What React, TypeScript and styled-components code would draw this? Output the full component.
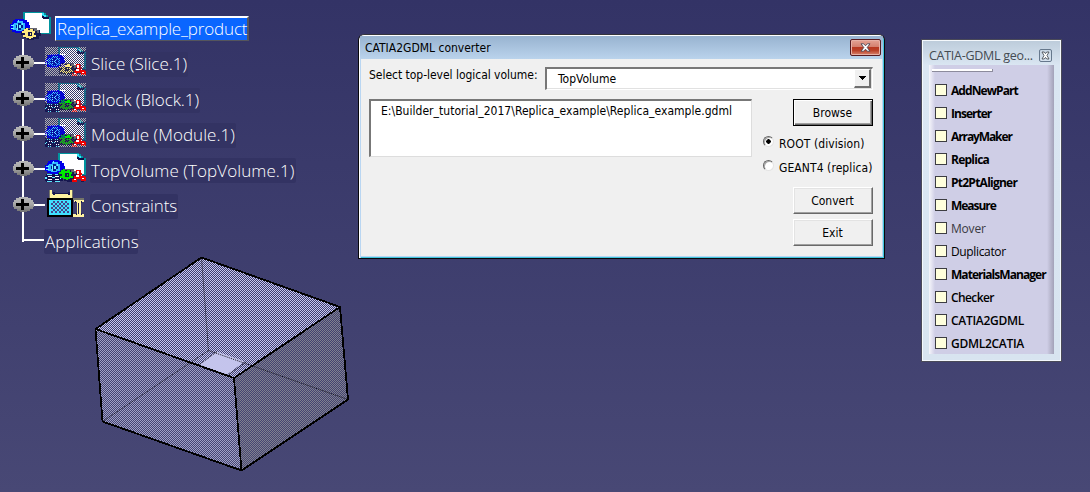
import React from 'react';
import styled, { createGlobalStyle } from 'styled-components';

const GlobalStyle = createGlobalStyle`
  * { box-sizing: border-box; }
  body { margin: 0; overflow: hidden; }
`;

const Desktop = styled.main`
  position: relative;
  width: 1090px;
  height: 492px;
  overflow: hidden;
  background: linear-gradient(#333366, #484875);
`;

/* ---------- specification tree ---------- */

const Tree = styled.section`
  position: absolute;
  left: 10px;
  top: 12px;
  width: 300px;
  color: #fff;
  font: 300 17px/24px 'Open Sans', 'Noto Sans', sans-serif;

  &::before {
    content: '';
    position: absolute;
    left: 12px;
    top: 27px;
    width: 2px;
    height: 203px;
    background: #fff;
  }
`;

const RootRow = styled.div`
  position: relative;
  display: flex;
  gap: 4px;
  height: 35px;
`;

const RootName = styled.span`
  margin-top: 4px;
  width: 194px;
  height: 25px;
  padding-left: 1px;
  border: solid;
  border-width: 2px 2px 1px 1px;
  border-color: #fff #55555c #55555c #fff;
  background: #0a66ff;
  line-height: 22px;
  letter-spacing: -0.16px;
  white-space: nowrap;
`;

const TreeRow = styled.div<{ $height: number }>`
  position: relative;
  display: flex;
  height: ${(p) => p.$height}px;
  padding-left: 3px;
`;

const Expander = styled.svg`
  width: 21px;
  height: 15px;
  margin-top: 8px;
  flex: none;
`;

const Branch = styled.i<{ $width?: number }>`
  width: ${(p) => p.$width ?? 11}px;
  height: 2px;
  margin-top: 15px;
  background: #fff;
`;

const LeafGap = styled.i`
  width: 9px;
`;

const TreeLabel = styled.span<{ $width: number; $spacing: number; $gap?: number; $line?: number }>`
  width: ${(p) => p.$width}px;
  height: 25px;
  margin: 5px 0 0 ${(p) => p.$gap ?? 4}px;
  padding-left: 1px;
  border-radius: 2px;
  background: #333363;
  letter-spacing: ${(p) => p.$spacing}px;
  line-height: ${(p) => p.$line ?? 24}px;
  white-space: nowrap;
`;

const IconSvg = styled.svg`
  width: 41px;
  height: 29px;
  flex: none;
  shape-rendering: crispEdges;
`;

const BlueGear = ({ x, y }: { x: number; y: number }) => (
  <g transform={`translate(${x} ${y})`}>
    <path d="M5 0h9v1h3v2h2v3h1v4h-2v2h-3v2H5v-1H2v-2H0V5h2V3h1V1h2z" fill="#0000e8" />
    <path d="M4 4h3V2h6v2h2v7h-3v1H6v-1H3V5h1z" fill="#30b8ff" />
    <path d="M8 4h3v2h2v3h-2v2H8V9H6V6h2z" fill="#001c90" />
    <path d="M9 6h2v3H9zM8 1h1v2H8zM1 6h3v1H1zM1 9h3v1H1z" fill="#70f0ff" />
    <path d="M7 5h1v6H7zM12 4h1v2h-1z" fill="#70f0ff" />
  </g>
);

const SmallGear = ({ x, y, color }: { x: number; y: number; color: string }) => (
  <g transform={`translate(${x} ${y})`}>
    <path d="M4 0h12v2h3v3h1v3h-2v3h-5v1H6v-2H3V7H0V4h2V2h2z" fill="#17174d" />
    <path d="M7 0h9v2h2v3h-2V3h-3V1H7z" fill="#686870" />
    <path
      d="M3 1h2V0h2v2h2V1h3v2h2v2h-1v2h2v2h-3v1h-2v1H8v-1H5V9H2V7h2V5H1V3h2zM7 4v4h4V4z"
      fill={color}
      fillRule="evenodd"
    />
    <path d="M9 5h1v2H9z" fill={color} />
  </g>
);

const Sheet = ({ x }: { x: number }) => (
  <g transform={`translate(${x} 0)`}>
    <path d="M0 0h21v1h2v2h2v2h3v17H0z" fill="#00949e" />
    <path d="M2 1h17v4h3v2h4v14H2z" fill="#fff" />
    <path d="M19 1h2v2h2v2h3v1h-3V5h-3z" fill="#35e5ff" />
    <path d="M19 4h2v1h5v2h-6V6h-1z" fill="#101048" />
  </g>
);

const PartShapes = ({ gear, wheels }: { gear: string; wheels: boolean }) => (
  <>
    <Sheet x={13} />
    <BlueGear x={0} y={7} />
    {wheels && (
      <g>
        <path d="M1 21h15v2h2v5h-3v1H1v-1H0v-5h1z" fill="#13134f" />
        <path d="M2 21h5v1H2zM10 21h5v1h-5zM0 24h2v2H0zM7 24h3v1H7zM15 24h2v2h-2zM2 28h5v1H2zM10 28h5v1h-5z" fill="#5eeaff" />
        <path d="M3 23h4v1H3zM10 23h4v1h-4zM3 26h4v1H3zM10 26h4v1h-4z" fill="#fff" />
      </g>
    )}
    <SmallGear x={13} y={16} color={gear} />
    <path d="M31 17h5v3h1v3h3v1h1v4h-5v-2h-4v3h-5v-3h2v-3h3v-3h-1z" fill="#f00000" />
    <path d="M32 18h2v3h-2zM31 22h3v2h-3zM36 22h1v1h-1zM29 26h2v1h-2zM37 25h2v1h-2z" fill="#fff" />
    <path d="M22 27h5v2h-5zM36 28h3v1h-3z" fill="#171750" />
  </>
);

const dither = (x0: number, y0: number, x1: number, y1: number) => {
  let d = '';
  for (let y = y0; y < y1; y++) {
    for (let x = x0 + ((x0 + y) % 2); x < x1; x += 2) d += `M${x} ${y}h1v1h-1z`;
  }
  return d;
};

const grayDots = dither(0, 0, 13, 8) + dither(0, 8, 2, 20) + dither(34, 0, 41, 4) + dither(14, 27, 41, 29);
const darkDots = dither(13, 0, 34, 7) + dither(34, 4, 41, 7) + dither(20, 7, 41, 17) + dither(35, 17, 41, 22);
const footDots = dither(0, 20, 14, 29);
const gearDots = dither(2, 8, 20, 20);
const smallGearDots = dither(14, 20, 30, 27);

const PartIcon = ({ gear, wheels = true, hidden = true }: { gear: string; wheels?: boolean; hidden?: boolean }) => (
  <IconSvg viewBox="0 0 41 29">
    <PartShapes gear={gear} wheels={wheels} />
    {hidden && (
      <>
        <path d={grayDots} fill="#b0b0b4" />
        <path d={darkDots} fill="#39396b" />
        <path d={footDots} fill={wheels ? '#1c1c58' : '#b0b0b4'} />
        <path d={gearDots} fill="#0a0ab8" />
        <path d={smallGearDots} fill="#3a3a50" />
      </>
    )}
  </IconSvg>
);

const ProductIcon = () => (
  <IconSvg viewBox="0 0 41 29">
    <Sheet x={13} />
    <BlueGear x={0} y={7} />
    <SmallGear x={11} y={16} color="#ffe880" />
  </IconSvg>
);

const meshDots = dither(3, 6, 12, 12);

const ConstraintIcon = () => (
  <IconSvg viewBox="0 0 41 29">
    <path d="M4 1h2v8H4zM26 1h2v8h-2zM28 9h11v2H28z" fill="#747468" />
    <path d="M5 1h2v4h18V1h2v8H5zM29 11h10v2h-3v12h3v3H28v-3h4V13h-3z" fill="#fff3a0" />
    <path d="M8 3h2v1h13V3h2v3h-2V5H10v1H8zM30 12h1v2h-1zM36 12h1v2h-1zM33 14h1v11h-1zM31 24h1v2h-1zM36 24h1v2h-1z" fill="#17174c" />
    <path d="M2 9h26v19H2z" fill="#000" />
    <path d="M4 11h22v15H4z" fill="#40dfff" />
    <path d={meshDots} fill="#45458c" transform="scale(2)" />
  </IconSvg>
);

const Plus = () => (
  <Expander viewBox="0 0 21 15">
    <defs>
      <linearGradient id="knob" x2="0" y2="1">
        <stop offset="0" stopColor="#b8b8b8" />
        <stop offset=".45" stopColor="#aaa" />
        <stop offset="1" stopColor="#707070" />
      </linearGradient>
    </defs>
    <path d="M6 0h9v1h3v2h2v2h1v5h-1v2h-3v2h-3v1H7v-1H4v-2H1v-2H0V5h1V3h2V1h3z" fill="url(#knob)" shapeRendering="crispEdges" />
    <path d="M8 2h3v4h5v3h-5v4H8V9H3V6h5z" fill="#000" shapeRendering="crispEdges" />
  </Expander>
);

const treeItems = [
  { label: 'Slice (Slice.1)', height: 36, width: 98, spacing: 0, icon: <PartIcon gear="#ffe880" wheels={false} /> },
  { label: 'Block (Block.1)', height: 35, width: 110, spacing: -0.06, icon: <PartIcon gear="#00e800" /> },
  { label: 'Module (Module.1)', height: 35, width: 146, spacing: 0.03, icon: <PartIcon gear="#00e800" /> },
  { label: 'TopVolume (TopVolume.1)', height: 36, width: 206, spacing: 0.09, line: 25, icon: <PartIcon gear="#00e800" hidden={false} /> },
  { label: 'Constraints', height: 35, width: 88, spacing: -0.1, icon: <ConstraintIcon /> },
];

/* ---------- solid preview ---------- */

const Solid = styled.svg`
  position: absolute;
  left: 90px;
  top: 252px;
  width: 264px;
  height: 224px;
`;

const Dither = ({ id, color }: { id: string; color: string }) => (
  <pattern id={id} width="2" height="2" patternUnits="userSpaceOnUse">
    <path d="M0 0h1v1H0zM1 1h1v1H1z" fill={color} shapeRendering="crispEdges" />
  </pattern>
);

const BoxModel = () => (
  <Solid viewBox="90 252 264 224">
    <defs>
      <Dither id="faceTop" color="#c6c6f0" />
      <Dither id="faceLeft" color="#a0a0c6" />
      <Dither id="faceRight" color="#80808e" />
    </defs>
    <path d="M201.5 257.5L340 307L234 378L95.5 329z" fill="url(#faceTop)" />
    <path d="M95.5 329L234 378L241.5 470.5L102.5 421.5z" fill="url(#faceLeft)" />
    <path d="M340 307L348 399.5L241.5 470.5L234 378z" fill="url(#faceRight)" />
    <path d="M217 351.5L244.5 361.5L227 374.5L199 365z" fill="#c4c4ec" />
    <g fill="none" stroke="#101018" strokeDasharray="1 1">
      <path d="M201.5 257.5L208.5 350.5L102.5 421.5M208.5 350.5L348 399.5" />
      <path d="M217 351.5L199 365L226 375M246 362L228 375" />
    </g>
    <path
      d="M201.5 257.5L340 307L234 378L95.5 329zM95.5 329L102.5 421.5L241.5 470.5L348 399.5L340 307M234 378L241.5 470.5"
      fill="none"
      stroke="#000"
      strokeWidth="1.8"
      strokeLinejoin="round"
      shapeRendering="crispEdges"
    />
  </Solid>
);

/* ---------- converter dialog ---------- */

const Dialog = styled.section`
  position: absolute;
  left: 358px;
  top: 34px;
  width: 527px;
  height: 225px;
  display: flex;
  flex-direction: column;
  border: 1px solid #08080c;
  border-top-color: #35353c;
  border-radius: 6px 6px 0 0;
  overflow: hidden;
  background: #f0f0f0;
  box-shadow: inset 1px 1px #fff, inset 2px 0 #b9d6f2, inset -1px -1px #3fc4dc, inset -2px -2px #b9d6f2;
  color: #000;
  font: 12px/16px 'DejaVu Sans Condensed', 'DejaVu Sans', sans-serif;
`;

const TitleBar = styled.header`
  display: flex;
  justify-content: space-between;
  align-items: flex-start;
  height: 23px;
  margin: 1px 1px 0;
  padding: 3px 2px 0 5px;
  background: linear-gradient(#98b3d0, #bad3ec);
  line-height: 18px;
`;

const CloseButton = styled.button`
  display: grid;
  place-items: center;
  width: 31px;
  height: 17px;
  padding: 0;
  border: 1px solid #551a20;
  border-radius: 2px;
  background: linear-gradient(#e5a394 0, #d4806f 45%, #b83820 50%, #ba4128 70%, #d88570);
  box-shadow: inset 0 0 0 1px #e7b0a5;
`;

const DialogBody = styled.div`
  display: grid;
  grid-template-columns: 383px 110px;
  column-gap: 11px;
  padding: 8px 0 0 10px;
`;

const VolumeRow = styled.div`
  grid-column: 1 / -1;
  display: flex;
  justify-content: space-between;
  height: 32px;
`;

const Caption = styled.label`
  letter-spacing: -0.03px;
`;

const Combo = styled.div`
  display: flex;
  justify-content: space-between;
  width: 328px;
  height: 23px;
  padding: 0 1px 1px 11px;
  border: solid;
  border-width: 2px 1px 1px 2px;
  border-color: #777 #fff #fff #777;
  box-shadow: inset -1px -1px #e1e1e1;
  background: #fff;
  line-height: 20px;
`;

const DropButton = styled.span`
  display: grid;
  place-items: center;
  width: 17px;
  height: 19px;
  border: solid;
  border-width: 1px 2px 2px 1px;
  border-color: #fff #707070 #707070 #fff;
  background: #f0f0f0;
`;

const PathBox = styled.div`
  height: 58px;
  padding: 2px 0 0 10px;
  border: solid;
  border-width: 2px 1px 1px 2px;
  border-color: #777 #ddd #ddd #777;
  background: #fff;
  letter-spacing: 0.03px;
  white-space: nowrap;
`;

const Controls = styled.div`
  display: flex;
  flex-direction: column;
  align-items: flex-end;
`;

const PushButton = styled.button<{ $default?: boolean; $top?: number }>`
  width: 80px;
  height: 27px;
  margin-top: ${(p) => p.$top ?? 0}px;
  padding: 1px 1px 0 0;
  border: 1px solid;
  border-color: ${(p) => (p.$default ? '#000' : '#fff #696969 #696969 #fff')};
  box-shadow: ${(p) =>
    p.$default
      ? 'inset 1px 1px #fff, inset -1px -1px #696969, inset -2px -2px #a0a0a0'
      : 'inset -1px -1px #a0a0a0, inset 1px 1px #e3e3e3'};
  background: #f0f0f0;
  color: #000;
  font: inherit;
  line-height: 24px;
`;

const RadioRow = styled.label<{ $top: number }>`
  display: flex;
  gap: 5px;
  width: 110px;
  height: 16px;
  margin-top: ${(p) => p.$top}px;
  letter-spacing: 0.08px;
  white-space: nowrap;
`;

const RadioDot = styled.i<{ $checked?: boolean }>`
  flex: none;
  width: 11px;
  height: 11px;
  border: solid 1px;
  border-color: #666 #e4e4e4 #e4e4e4 #666;
  box-shadow: inset 1px 1px #aaa;
  border-radius: 50%;
  background: ${(p) => (p.$checked ? 'radial-gradient(circle, #000 0 2px, #fff 2.5px)' : '#fff')};
`;

/* ---------- macro toolbar ---------- */

const Palette = styled.aside`
  position: absolute;
  left: 921px;
  top: 39px;
  width: 141px;
  height: 323px;
  padding: 0 7px 7px;
  border: 1px solid #4a4a58;
  background: linear-gradient(#bccbda, #dae6f2 25px, #d8e4f0);
  box-shadow: inset 0 0 0 1px #f4f8fc;
  font-family: 'Open Sans', 'Noto Sans', sans-serif;
`;

const PaletteTitle = styled.header`
  display: flex;
  justify-content: space-between;
  height: 25px;
  padding: 7px 2px 0 0;
  color: #444b52;
  font-size: 12.5px;
  line-height: 17px;
  letter-spacing: -0.27px;
`;

const PaletteClose = styled.span`
  display: grid;
  place-items: center;
  width: 13px;
  height: 13px;
  margin-top: 2px;
  border: 1px solid #66788c;
  border-radius: 2px;
`;

const PaletteBody = styled.div`
  height: 289px;
  padding: 4px 0 0 3px;
  background: linear-gradient(90deg, #f6f6fb 0, #cfcee6 6px, #cfcee6 118px, #a3a2b8 125px);
`;

const Grip = styled.div`
  width: 61px;
  height: 3px;
  margin-bottom: 6px;
  background: #fff;
  border-right: 1px solid #8c8b9c;
  border-bottom: 1px solid #8c8b9c;
`;

const MacroRow = styled.div<{ $weight: number; $spacing: number; $muted?: boolean }>`
  display: flex;
  align-items: flex-start;
  gap: 4px;
  height: 23px;
  padding: 5px 0 0 3px;
  color: ${(p) => (p.$muted ? '#3a3a42' : '#000')};
  font-size: 12px;
  line-height: 15px;
  font-weight: ${(p) => p.$weight};
  letter-spacing: ${(p) => p.$spacing}px;
  white-space: nowrap;
`;

const MacroBox = styled.i`
  width: 12px;
  height: 12px;
  margin-top: 1px;
  border: 1px solid #3d3d42;
  background: #ffffdc;
`;

const macros = [
  { name: 'AddNewPart', weight: 700, spacing: -0.92 },
  { name: 'Inserter', weight: 700, spacing: -0.98 },
  { name: 'ArrayMaker', weight: 700, spacing: -1.1 },
  { name: 'Replica', weight: 700, spacing: -0.75 },
  { name: 'Pt2PtAligner', weight: 700, spacing: -0.75 },
  { name: 'Measure', weight: 700, spacing: -1.05 },
  { name: 'Mover', weight: 400, spacing: -0.2, muted: true },
  { name: 'Duplicator', weight: 500, spacing: -0.35 },
  { name: 'MaterialsManager', weight: 700, spacing: -0.95 },
  { name: 'Checker', weight: 600, spacing: -0.6 },
  { name: 'CATIA2GDML', weight: 600, spacing: -0.29 },
  { name: 'GDML2CATIA', weight: 600, spacing: -0.29 },
];

export default function App() {
  return (
    <>
      <GlobalStyle />
      <Desktop>
        <BoxModel />
        <Tree>
          <RootRow>
            <ProductIcon />
            <RootName>Replica_example_product</RootName>
          </RootRow>
          {treeItems.map((item) => (
            <TreeRow key={item.label} $height={item.height}>
              <Plus />
              <Branch />
              {item.icon}
              <TreeLabel $width={item.width} $spacing={item.spacing} $line={item.line}>{item.label}</TreeLabel>
            </TreeRow>
          ))}
          <TreeRow $height={35}>
            <LeafGap />
            <Branch $width={22} />
            <TreeLabel $width={94} $spacing={0.08} $gap={0} $line={25}>Applications</TreeLabel>
          </TreeRow>
        </Tree>

        <Dialog>
          <TitleBar>
            CATIA2GDML converter
            <CloseButton aria-label="Close">
              <svg width="11" height="9" viewBox="0 0 11 9">
                <path d="M1 .8h2.7l1.8 2 1.8-2H10L7.2 4.5 10 8.2H7.3l-1.8-2-1.8 2H1l2.8-3.7z" fill="#fff" stroke="#4c4654" strokeWidth=".9" />
              </svg>
            </CloseButton>
          </TitleBar>
          <DialogBody>
            <VolumeRow>
              <Caption>Select top-level logical volume:</Caption>
              <Combo>
                TopVolume
                <DropButton>
                  <svg width="7" height="4" viewBox="0 0 7 4" shapeRendering="crispEdges">
                    <path d="M0 0h7v1H6v1H5v1H4v1H3V3H2V2H1V1H0z" />
                  </svg>
                </DropButton>
              </Combo>
            </VolumeRow>
            <PathBox>E:\Builder_tutorial_2017\Replica_example\Replica_example.gdml</PathBox>
            <Controls>
              <PushButton $default>Browse</PushButton>
              <RadioRow $top={10}><RadioDot $checked />ROOT (division)</RadioRow>
              <RadioRow $top={8}><RadioDot />GEANT4 (replica)</RadioRow>
              <PushButton $top={11}>Convert</PushButton>
              <PushButton $top={5}>Exit</PushButton>
            </Controls>
          </DialogBody>
        </Dialog>

        <Palette>
          <PaletteTitle>
            CATIA-GDML geo...
            <PaletteClose>
              <svg width="9" height="9" viewBox="0 0 9 9">
                <path d="M1 1h2.3l1.2 1.6L5.7 1H8L6 4.5 8 8H5.7L4.5 6.4 3.3 8H1l2-3.5z" fill="#fff" stroke="#4a5058" strokeWidth=".9" />
              </svg>
            </PaletteClose>
          </PaletteTitle>
          <PaletteBody>
            <Grip />
            {macros.map((m) => (
              <MacroRow key={m.name} $weight={m.weight} $spacing={m.spacing} $muted={m.muted}>
                <MacroBox />
                {m.name}
              </MacroRow>
            ))}
          </PaletteBody>
        </Palette>
      </Desktop>
    </>
  );
}
